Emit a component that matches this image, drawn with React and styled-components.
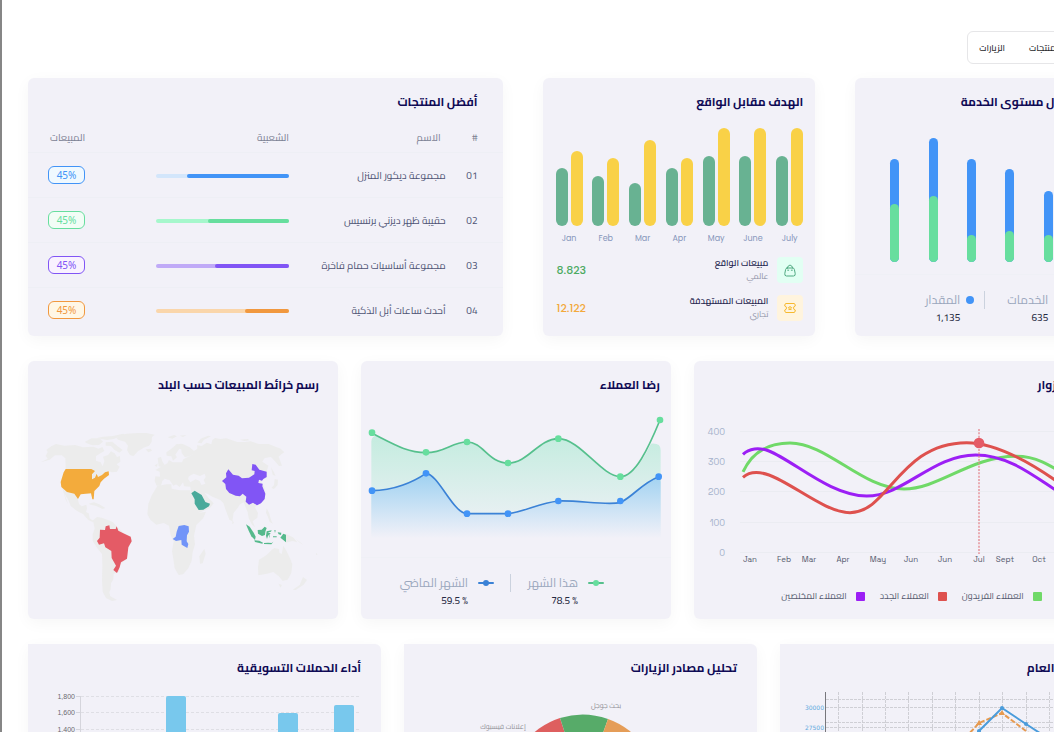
import React from "react";
import styled, { createGlobalStyle } from "styled-components";

const arabic = '"Cairo", "Open Sans", "DejaVu Sans", sans-serif';
const latin = '"Poppins", "Inter", sans-serif';
const grotesk = '"Space Grotesk", "Poppins", "Inter", sans-serif';

const GlobalStyle = createGlobalStyle`
  * { box-sizing: border-box; }
  body { margin: 0; background: #fff; font-family: ${arabic}; }
`;

const Page = styled.div`
  height: 100vh;
  overflow: hidden;
  border-left: 2px solid #868686;
`;

const Board = styled.main`
  width: calc(100% + 107px);
  height: 100%;
  padding: 31px 28px 0 26px;
  display: flex;
  flex-direction: column;
`;

const Nav = styled.nav`
  direction: rtl;
  align-self: flex-end;
  flex: none;
  width: 15%;
  height: 33px;
  margin-bottom: 14px;
  padding: 0 11px;
  display: flex;
  align-items: center;
  justify-content: flex-end;
  gap: 24px;
  border: 1px solid #e6e6e8;
  border-radius: 6px;
`;

const NavButton = styled.button`
  border: 0;
  padding: 0;
  background: none;
  color: #27272b;
  font: 500 9px/16px ${arabic};
  white-space: nowrap;
`;

const Row = styled.div`
  display: grid;
  flex: ${(p) => (p.$fill ? "1 0 0" : "none")};
  grid-template-columns: ${(p) => p.$columns};
  grid-template-rows: ${(p) => (p.$fill ? "minmax(0, 1fr)" : "258px")};
  gap: ${(p) => p.$gap};
  margin-bottom: ${(p) => (p.$fill ? "0" : "25px")};
`;

const Card = styled.section`
  direction: rtl;
  min-width: 0;
  display: flex;
  flex-direction: column;
  overflow: hidden;
  background: #f2f1f8;
  border-radius: ${(p) => (p.$flat ? "0 6px 0 0" : "6px")};
  box-shadow: 0 4px 16px rgba(0, 0, 0, 0.04);
`;

const Title = styled.h2`
  flex: none;
  margin: 0;
  padding: 0 ${(p) => p.$inset}px;
  color: #0f0a55;
  font-size: 12px;
  font-weight: 700;
  line-height: 48px;
  white-space: nowrap;
`;

const ProductTable = styled.table`
  width: 100%;
  table-layout: fixed;
  border-collapse: collapse;
  color: #4e5374;
  font-size: 10px;

  th, td {
    padding: 0;
    text-align: start;
    font-weight: 400;
    white-space: nowrap;
  }
  th { height: 26px; padding-bottom: 3px; color: #7b8093; }
  td { height: 45px; padding-top: 2px; border-top: 1px solid #eeeff5; }
  th:first-child, td:first-child { width: 12%; padding-inline-start: 25px; }
  th:nth-child(2) { width: 33%; padding-inline-start: 5px; }
  th:nth-child(3) { width: 28%; }
  td:last-child { padding-top: 0; }
  th:last-child { text-align: end; padding-inline-end: 22px; }
  td:last-child { padding-inline-end: 20px; }
`;

const Track = styled.div`
  height: 4px;
  border-radius: 2px;
  background: ${(p) => p.$color};
`;

const Fill = styled.div`
  height: 4px;
  border-radius: 2px;
  background: ${(p) => p.$color};
`;

const Badge = styled.span`
  display: block;
  width: 37px;
  margin-right: auto;
  border: 1px solid ${(p) => p.$color};
  border-radius: 6px;
  background: ${(p) => p.$bg};
  color: ${(p) => p.$color};
  font-family: "Noto Sans", sans-serif;
  font-size: 10px;
  line-height: 16px;
  text-align: center;
  direction: ltr;
`;

const MonthBars = styled.div`
  direction: ltr;
  display: flex;
  justify-content: space-between;
  padding: 2px 12px 0 13px;
`;

const Month = styled.div`
  width: 27px;
  color: #8696bb;
  font: 400 8px/15px ${latin};
  text-align: center;
`;

const Pair = styled.div`
  display: flex;
  align-items: flex-end;
  justify-content: space-between;
  height: 98px;
  margin-bottom: 5px;
`;

const Bar = styled.div`
  width: 12px;
  border-radius: 6px;
  background: ${(p) => p.$color};
`;

const TotalRow = styled.div`
  display: flex;
  align-items: center;
  gap: 9px;
  margin: 10px 12px 0 14px;
`;

const IconTile = styled.div`
  display: grid;
  place-items: center;
  width: 26px;
  height: 26px;
  border-radius: 4px;
  background: ${(p) => p.$bg};
`;

const TotalText = styled.div`
  flex: 1;
  color: #25254f;
  font-size: 9px;
  font-weight: 600;
  line-height: 14px;

  small { display: block; color: #8c8fa5; font-size: 8px; font-weight: 400; }
`;

const TotalValue = styled.span`
  color: ${(p) => p.$color};
  font: 500 11px/16px ${latin};
`;

const ServiceBars = styled.div`
  direction: ltr;
  display: flex;
  align-items: flex-end;
  justify-content: space-between;
  height: 136px;
  padding: 0 42px 0 35px;
`;

const Stack = styled.div`
  width: 9px;
  display: flex;
  align-items: flex-end;
  border-radius: 5px;
  background: #4294f7;
`;

const StackPart = styled.div`
  width: 9px;
  border-radius: 5px;
  background: #67de9e;
`;

const Legend = styled.div`
  direction: ${(p) => (p.$ltr ? "ltr" : "rtl")};
  display: flex;
  align-items: flex-start;
  gap: ${(p) => (p.$ltr ? "10px" : "16px")};
  margin-top: 12px;
  padding: ${(p) => (p.$ltr ? "16px 24px 0 14px" : "16px 67px 0 0")};
  border-top: 1px solid #eff0f6;
`;

const Separator = styled.div`
  width: 1px;
  height: 18px;
  background: #cbd2de;
`;

const LegendItem = styled.div`
  direction: rtl;
  display: grid;
  grid-template-columns: auto auto;
  justify-content: start;
  align-items: center;
  width: ${(p) => p.$width};
  column-gap: ${(p) => p.$space};
  color: #9ba7bd;
  font-size: 12px;
  line-height: 18px;
  white-space: nowrap;

  strong {
    grid-column: 2;
    color: #262a42;
    font: 500 10px/18px ${arabic};
    direction: ltr;
    text-align: right;
  }
`;

const Dot = styled.i`
  width: 8px;
  height: 8px;
  border-radius: 50%;
  background: ${(p) => p.$color};
`;

const Chart = styled.svg`
  display: block;
  flex: none;
  direction: ltr;
  width: 100%;
  height: auto;
  margin-top: ${(p) => p.$top || 0}px;
`;

const SeriesLegend = styled.div`
  display: flex;
  justify-content: center;
  gap: 15px;
  margin-top: 20px;
  padding-inline-start: 4px;
  color: #555a6e;
  font-size: 9px;
  line-height: 16px;
  white-space: nowrap;

  span { display: flex; align-items: center; gap: 9px; }
`;

const Swatch = styled.i`
  width: 9px;
  height: 9px;
  border-radius: 1px;
  background: ${(p) => p.$color};
`;

const products = [
  ["01", "مجموعة ديكور المنزل", 77, "#4294f7", "#d3e6fb", "#f0f9ff"],
  ["02", "حقيبة ظهر ديزني برنسيس", 61, "#67de9e", "#a6f7cc", "#f2fdf6"],
  ["03", "مجموعة أساسيات حمام فاخرة", 56, "#8155f5", "#c0aaf7", "#f9f2ff"],
  ["04", "أحدث ساعات أبل الذكية", 33, "#f1983f", "#fad6ab", "#fff7e6"],
];

const months = [
  ["Jan", 58, 75], ["Feb", 50, 68], ["Mar", 43, 86], ["Apr", 58, 68],
  ["May", 70, 98], ["June", 70, 98], ["July", 70, 98],
];

const services = [[103, 58], [124, 66], [103, 27], [93, 31], [71, 27], [88, 40]];

function Products() {
  return (
    <Card>
      <Title $inset={25}>أفضل المنتجات</Title>
      <ProductTable>
        <thead>
          <tr><th>#</th><th>الاسم</th><th>الشعبية</th><th>المبيعات</th></tr>
        </thead>
        <tbody>
          {products.map(([id, name, share, color, soft, bg]) => (
            <tr key={id}>
              <td>{id}</td>
              <td>{name}</td>
              <td><Track $color={soft}><Fill $color={color} style={{ width: share + "%" }} /></Track></td>
              <td><Badge $color={color} $bg={bg}>45%</Badge></td>
            </tr>
          ))}
        </tbody>
      </ProductTable>
    </Card>
  );
}

function Target() {
  return (
    <Card>
      <Title $inset={12}>الهدف مقابل الواقع</Title>
      <MonthBars>
        {months.map(([name, real, goal]) => (
          <Month key={name}>
            <Pair>
              <Bar $color="#68b292" style={{ height: real }} />
              <Bar $color="#f9d147" style={{ height: goal }} />
            </Pair>
            {name}
          </Month>
        ))}
      </MonthBars>
      <TotalRow>
        <IconTile $bg="#e2fff3">
          <svg width="12" height="13" viewBox="0 0 12 13" fill="none" stroke="#4fa980" strokeLinecap="round" strokeLinejoin="round">
            <path d="M3 4H9Q10 4 10.4 5.5L11.2 9.5Q11.6 12 9.5 12H2.5Q.4 12 .8 9.500L1.600 5.500Q2 4 3 4Z" />
            <path d="M3.500 4C3.500 .2 8.500 .2 8.500 4M3.700 6.200H4.700M7.300 6.200H8.300" />
          </svg>
        </IconTile>
        <TotalText>مبيعات الواقع<small>عالمي</small></TotalText>
        <TotalValue $color="#4caa62">8.823</TotalValue>
      </TotalRow>
      <TotalRow>
        <IconTile $bg="#fff4de">
          <svg width="12" height="12" viewBox="0 0 12 12" fill="none" stroke="#f7b92f" strokeLinejoin="round">
            <path d="M2 1.500H10Q11.300 1.500 11.300 4Q9.500 4.300 9.500 6T11.300 8Q11.300 10.500 10 10.500H2Q.7 10.500 .7 8Q2.500 7.700 2.500 6T.7 4Q.7 1.500 2 1.500Z" />
            <path d="M6 4.300L6.600 5.400L7.700 5.600L6.900 6.500L7.100 7.700L6 7.200L4.900 7.700L5.100 6.500L4.300 5.600L5.400 5.400Z" />
          </svg>
        </IconTile>
        <TotalText>المبيعات المستهدفة<small>تجاري</small></TotalText>
        <TotalValue $color="#f3a93c">12.122</TotalValue>
      </TotalRow>
    </Card>
  );
}

function ServiceLevel() {
  return (
    <Card>
      <Title $inset={56}>معدل مستوى الخدمة</Title>
      <ServiceBars>
        {services.map(([all, part], i) => (
          <Stack key={i} style={{ height: all }}><StackPart style={{ height: part }} /></Stack>
        ))}
      </ServiceBars>
      <Legend $ltr>
        <LegendItem $width="105px" $space="6px"><Dot $color="#4294f7" />المقدار<strong>1,135</strong></LegendItem>
        <Separator />
        <LegendItem $width="70px" $space="9px"><Dot $color="#67de9e" />الخدمات<strong>635</strong></LegendItem>
      </Legend>
    </Card>
  );
}

// Land outlines on an 840 x 520 grid whose origin is (60, 240).
const land = [
  // North America
  "M63 337L84 326L78 318L84 306L80 299L96 288L109 282L135 287L166 285L190 292L222 290L236 296L248 291L254 303L244 309L229 318L229 332L243 337L249 349L254 334L250 320L265 315L274 304L285 310L292 321L301 318L302 335L291 343L300 350L292 365L278 367L266 364L230 390L219 447L213 431L185 432L174 446L178 462L186 469L200 464L202 475L199 486L207 490L210 505L218 511L226 509L220 517L205 509L191 493L171 482L153 468L147 452L133 428L145 461L138 449L128 415L125 399L138 357L137 325L126 316L106 316L90 329Z",
  "M195 276L216 265L240 265L250 275L238 285L218 286L205 281Z",
  "M258 277L278 275L293 288L309 300L299 308L284 299L274 288L258 287Z",
  "M232 264L250 260L280 258L310 251L320 256L299 260L282 267L262 270L248 268Z",
  "M290 263L320 251L355 249L380 249L405 254L397 261L396 276L388 287L372 293L355 304L341 319L330 314L322 300L325 287L316 275L295 269Z",
  "M378 298L393 296L397 302L386 307Z",
  "M207 461L223 457L239 463L257 474L249 477L230 468L213 464Z",
  // South America
  "M220 511L232 501L246 503L263 509L279 516L292 530L311 548L334 560L337 574L326 594L322 626L301 643L298 665L282 672L281 688L274 700L273 717L269 727L272 739L292 750L277 753L259 744L249 725L247 691L248 646L247 612L232 593L219 573L219 553L225 536Z",
  // Africa
  "M413 408L441 403L455 403L456 416L481 421L511 421L515 440L529 469L539 488L559 485L551 504L530 525L523 557L526 583L519 606L516 632L506 655L490 673L477 675L465 655L461 628L457 604L462 574L453 556L448 527L432 519L410 524L392 509L383 492L386 461L397 434Z",
  "M554 596L558 611L549 640L541 641L539 619Z",
  // Europe and Asia
  "M405 393L407 379L421 380L420 365L407 360L422 352L434 345L443 340L448 330L459 337L487 337L491 328L509 319L521 312L507 319L496 322L490 314L486 309L485 298L479 296L467 314L472 322L460 332L455 319L441 317L440 307L457 295L470 283L488 281L510 292L523 303L533 296L532 286L546 288L561 278L575 283L578 270L586 264L602 267L620 265L653 276L674 276L693 274L718 282L747 282L783 296L794 307L785 313L777 320L787 347L778 348L766 334L754 321L735 324L728 335L746 347L741 365L741 383L729 389L725 398L733 409L738 433L733 453L713 465L706 472L715 489L713 503L699 514L706 532L696 523L687 504L684 487L672 457L661 463L654 474L642 488L638 514L629 509L618 480L611 459L602 450L578 440L566 433L555 428L566 443L582 460L571 474L539 488L526 467L513 439L514 424L512 410L493 409L490 397L480 411L469 403L454 387L455 382L470 403L461 407L450 391L435 386L428 393L424 407L411 407Z",
  "M417 349L414 324L424 321L429 336L435 345L426 351ZM405 347L414 340L412 350Z",
  "M444 262L463 255L472 259L458 266ZM480 257L501 255L490 261ZM533 278L543 266L565 257L574 259L552 270L546 280ZM660 269L684 267L690 271L674 273Z",
  "M765 387L775 389L774 405L763 417L755 414L763 405ZM754 352L762 365L768 378L759 374Z",
  "M638 509L643 518L638 523ZM741 475L748 488L755 512L760 521L750 516L745 501L739 488Z",
  // Oceania
  "M718 629L741 615L755 601L764 594L778 597L779 608L786 612L791 587L801 604L811 625L818 643L815 669L804 689L789 693L779 680L761 666L742 671L716 676L715 653Z",
  "M777 701L787 705L782 713ZM850 681L862 690L852 704L828 720L819 719L840 705Z",
  "M799 552L820 562L833 577L818 573L799 578ZM829 568L844 578L852 586L838 576ZM889 609L894 613L889 615Z",
];

function SalesMap() {
  return (
    <Card>
      <Title $inset={19}>رسم خرائط المبيعات حسب البلد</Title>
      <Chart viewBox="25 180 930 580" $top={1}>
        <g fill="#ececec">{land.map((d) => <path key={d} d={d} />)}</g>
        <g fill="#f2f1f8">
          <path d="M508 379L522 371L541 378L554 375L549 382L551 401L545 405L540 393L528 388L512 397L505 386Z" />
          <path d="M543 377L555 371L558 381L552 390L557 401L548 404Z" />
        </g>
        <path fill="#f3ab3c" d="M138 357H215L226 363L217 373L217 388L226 383L231 371L235 381L247 375L256 367L267 364L268 375L253 386L243 397L239 408L224 423L222 448H218L214 430L198 431L183 433L175 447L164 431L142 426L125 411L123 396L132 367Z" />
        <path fill="#e45b66" d="M241 539L256 540L258 529L269 526L271 537L288 537L291 529L296 542L311 550L333 560L336 574L326 592L322 626L304 637L300 652L292 669L281 660L289 647L276 624L275 603L257 592L253 580L238 584L232 573L240 563Z" />
        <path fill="#7194f8" d="M477 528L494 525L507 529L508 545L502 556L501 574L506 582L503 594L486 584L485 570L469 573L459 567L468 560L471 545Z" />
        <path fill="#4aaa9b" d="M515 430L525 422L546 435L557 456L571 461L568 469L551 479L537 480L525 461L525 448Z" />
        <path fill="#8155f5" d="M607 393L620 382L619 370L626 358L640 374L657 377L667 385L688 383L704 373L705 363L696 361L698 342L708 344L719 359L741 365L741 381L731 387L727 392L718 389L716 399L729 401L728 409L737 431L735 447L724 460L712 466L700 458L688 464L678 455L680 440L669 431L661 439L648 437L629 429L619 417L617 402Z" />
        <g fill="#55b98c">
          <path d="M679 523L690 530L702 548L708 560L706 570L695 559L687 542Z" />
          <path d="M704 571L719 572L730 578L728 581L706 576ZM714 540L726 539L735 530L741 534L737 545L736 555L727 558L715 551Z" />
          <path d="M741 544L756 541L754 545L744 547L753 550L749 554L751 565L746 554L742 567L739 557ZM764 540L768 541L766 549ZM760 559H771V562H760ZM733 579L745 578L756 579L761 575L755 583L733 582ZM774 547L785 548L784 555L777 553ZM782 563L791 551L799 554V577L787 567Z" />
        </g>
      </Chart>
    </Card>
  );
}

const greenLine = "M66 250C130 282 170 308 228 308C285 308 305 276 351 276C400 276 415 339 474 339C535 339 565 266 625 266C690 266 755 380 811 380C855 380 895 295 930 210";
const blueLine = "M66 422C130 422 190 396 228 370C265 372 310 491 351 491H474C525 485 565 460 625 453C690 451 765 466 811 458C855 435 875 400 926 380";

function Satisfaction() {
  return (
    <Card>
      <Title $inset={11}>رضا العملاء</Title>
      <Chart viewBox="33 183 930 402" $top={2}>
        <defs>
          <linearGradient id="green-area" x1="0" y1="0" x2="0" y2="1">
            <stop offset="0" stopColor="#c4ecdf" />
            <stop offset="1" stopColor="#f2f1f8" />
          </linearGradient>
          <linearGradient id="blue-area" x1="0" y1="0" x2="0" y2="1">
            <stop offset="0" stopColor="#9ed1f1" />
            <stop offset="1" stopColor="#f2f1f8" />
          </linearGradient>
        </defs>
        <path fill="url(#green-area)" d="M64 275Q64 258 80 257C130 282 170 308 228 308C285 308 305 276 351 276C400 276 415 339 474 339C535 339 565 266 625 266C690 266 755 380 811 380C850 380 875 335 903 281Q932 278 932 300V565H64Z" />
        <path fill="url(#blue-area)" d="M64 422C130 422 190 396 228 370C265 372 310 491 351 491H474C525 485 565 460 625 453C690 451 765 466 811 458C855 435 875 400 920 384Q932 385 932 396V565H64Z" />
        <g fill="none" strokeWidth="5">
          <path stroke="#56c08d" d={greenLine} />
          <path stroke="#3b82d6" d={blueLine} />
        </g>
        <g fill="#67de9e">
          {[[66, 248], [228, 307], [351, 276], [474, 339], [625, 266], [811, 380], [930, 210]].map(([x, y]) => <circle key={x} cx={x} cy={y} r="10" />)}
        </g>
        <g fill="#4294f7">
          {[[66, 422], [228, 370], [351, 491], [474, 491], [625, 453], [811, 453], [926, 380]].map(([x, y]) => <circle key={x} cx={x} cy={y} r="10" />)}
        </g>
      </Chart>
      <Legend>
        <LegendItem $width="77px" $space="10px">
          <svg width="16" height="8" viewBox="0 0 16 8"><path d="M1 4H15" stroke="#56c08d" strokeWidth="2" strokeLinecap="round" /><circle cx="8" cy="4" r="3" fill="#67de9e" /></svg>
          هذا الشهر<strong>78.5 %</strong>
        </LegendItem>
        <Separator />
        <LegendItem $width="auto" $space="10px">
          <svg width="16" height="8" viewBox="0 0 16 8"><path d="M1 4H15" stroke="#3b82d6" strokeWidth="2" strokeLinecap="round" /><circle cx="8" cy="4" r="3" fill="#3b82d6" /></svg>
          الشهر الماضي<strong>59.5 %</strong>
        </LegendItem>
      </Legend>
    </Card>
  );
}

const visitorMonths = [["Jan", 56], ["Feb", 90], ["Mar", 115], ["Apr", 149], ["May", 184], ["Jun", 217], ["Jun", 251], ["Jul", 285], ["Sept", 311], ["Oct", 345], ["Nov", 379], ["Dec", 411]];

function Visitors() {
  return (
    <Card>
      <Title $inset={44}>رؤى الزوار</Title>
      <Chart viewBox="0 0 439 150" $top={9}>
        <g stroke="#ebecf2">
          {[13, 43, 73, 104, 134].map((y) => <path key={y} d={`M46 ${y}.5H439`} />)}
        </g>
        <g fill="#a5b2cb" fontFamily={grotesk} fontSize="9" textAnchor="end">
          {[[400, 17], [300, 47], [200, 77], [100, 108], [0, 138]].map(([n, y]) => <text key={n} x="31" y={y}>{n}</text>)}
        </g>
        <g fill="#555a6e" fontFamily={grotesk} fontSize="8" textAnchor="middle">
          {visitorMonths.map(([m, x]) => <text key={x} x={x} y="144">{m}</text>)}
        </g>
        <g transform="translate(-10 -68) scale(.33333)" fill="none" strokeWidth="9">
          <path stroke="#70d968" d="M177 366C205 305 255 279 318 279C430 279 535 417 660 417C765 417 860 319 995 319C1080 319 1120 365 1200 410" />
          <path stroke="#9c1ff5" d="M177 313C195 295 225 291 255 303C330 333 440 438 548 438C660 438 745 315 875 315C980 315 1060 387 1130 430" />
          <path stroke="#de514e" d="M177 382C196 365 220 363 255 375C325 400 425 488 498 488C615 488 645 279 848 278C945 278 1060 352 1130 402" />
          <path stroke="#e4888f" strokeWidth="4" strokeDasharray="6 4" d="M885 237V612" />
          <circle cx="885" cy="279" r="16" fill="#e45b66" />
        </g>
      </Chart>
      <SeriesLegend>
        <span><Swatch $color="#70d968" />العملاء الفريدون</span>
        <span><Swatch $color="#de514e" />العملاء الجدد</span>
        <span><Swatch $color="#9c1ff5" />العملاء المخلصين</span>
      </SeriesLegend>
    </Card>
  );
}

function Campaigns() {
  return (
    <Card $flat>
      <Title $inset={20}>أداء الحملات التسويقية</Title>
      <Chart viewBox="0 0 353 120">
        <g stroke="#dfdfe5" strokeDasharray="3 2">
          {[4, 20, 37, 53].map((y) => <path key={y} d={`M53 ${y}.5H333`} />)}
        </g>
        <path d="M52.500 4V120M48 4.500H52M48 20.500H52M48 37.500H52" stroke="#d5d5dc" />
        <g fill="#6b6b70" fontFamily='"Liberation Sans", sans-serif' fontSize="7" textAnchor="end">
          <text x="47" y="7">1,800</text>
          <text x="47" y="23">1,600</text>
          <text x="47" y="40">1,400</text>
        </g>
        <g fill="#78c8ed">
          <rect x="138" y="4" width="20" height="116" rx="2" />
          <rect x="250" y="21" width="20" height="99" rx="2" />
          <rect x="306" y="13" width="20" height="107" rx="2" />
        </g>
      </Chart>
    </Card>
  );
}

function Sources() {
  return (
    <Card $flat>
      <Title $inset={20}>تحليل مصادر الزيارات</Title>
      <Chart viewBox="0 0 353 174">
        <path fill="#de5f5f" d="M179 97L156 26A75 75 0 0 0 104 97Z" />
        <path fill="#57ab69" d="M179 97L156 26A75 75 0 0 1 204 27Z" />
        <path fill="#e59d58" d="M179 97L204 27A75 75 0 0 1 254 97Z" />
        <g fill="#8f8f96" fontFamily={arabic} fontSize="7" textAnchor="middle">
          <text x="202" y="16">بحث جوجل</text>
          <text x="99" y="37">إعلانات فيسبوك</text>
        </g>
      </Chart>
    </Card>
  );
}

function Overview() {
  return (
    <Card $flat>
      <Title $inset={10}>ملخص الأداء العام</Title>
      <Chart viewBox="0 0 353 120">
        <g stroke="#cfcfd5" strokeDasharray="3 1">
          {[58, 82, 105, 128, 152, 175, 199, 222, 246, 269, 293, 316].map((x) => <path key={x} d={`M${x}.5 0V120`} />)}
          {[7, 15, 30, 35, 50].map((y) => <path key={y} d={`M46 ${y}.5H340`} />)}
        </g>
        <path d="M45.500 -1V120" stroke="#77777c" />
        <g fill="#5eaade" fontFamily='"DejaVu Sans", sans-serif' fontSize="6" textAnchor="end">
          <text x="44" y="18">30000</text>
          <text x="44" y="38">27500</text>
        </g>
        <path fill="none" stroke="#e69a50" strokeWidth="2" strokeDasharray="5 2" d="M176 56L199 31L222 21L246 39L269 60" />
        <path fill="none" stroke="#4b9cdb" strokeWidth="2" d="M176 65L199 39L222 16L246 32L269 47" />
        <path fill="#e69a50" d="M222 18L225 23H219ZM199 28L202 33H196Z" />
        <g fill="#4b9cdb"><circle cx="222" cy="16" r="2" /><circle cx="246" cy="32" r="2" /><circle cx="199" cy="39" r="2" /></g>
      </Chart>
    </Card>
  );
}

export default function App() {
  return (
    <Page>
      <GlobalStyle />
      <Board>
        <Nav>
          <NavButton type="button">المنتجات</NavButton>
          <NavButton type="button">الزيارات</NavButton>
        </Nav>
        <Row $columns="475fr 273fr 278fr" $gap="40px">
          <Products />
          <Target />
          <ServiceLevel />
        </Row>
        <Row $columns="310fr 310fr 439fr" $gap="23px">
          <SalesMap />
          <Satisfaction />
          <Visitors />
        </Row>
        <Row $columns="1fr 1fr 1fr" $gap="23px" $fill>
          <Campaigns />
          <Sources />
          <Overview />
        </Row>
      </Board>
    </Page>
  );
}
